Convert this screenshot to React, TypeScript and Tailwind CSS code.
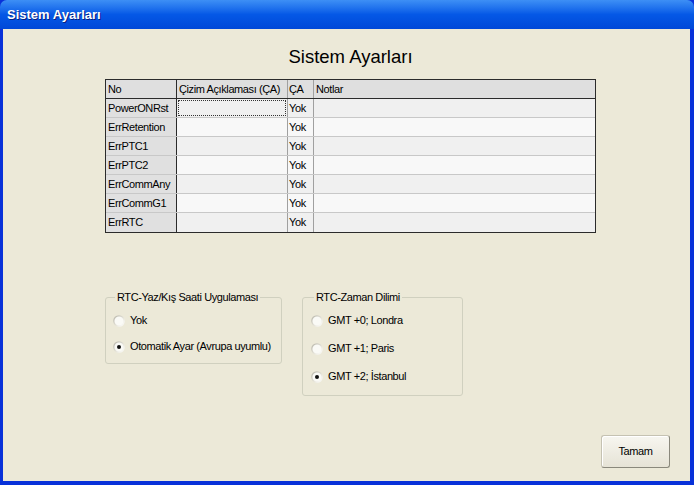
import React from "react";

const rows = [
  "PowerONRst",
  "ErrRetention",
  "ErrPTC1",
  "ErrPTC2",
  "ErrCommAny",
  "ErrCommG1",
  "ErrRTC",
];

const Radio = ({ checked, label }: { checked?: boolean; label: string }) => (
  <div className="flex items-center gap-[5px] h-[13px] whitespace-nowrap">
    <svg width="12" height="12" viewBox="0 0 12 12" className="shrink-0">
      <defs>
        <linearGradient id="rg" x1="0" y1="0" x2="1" y2="1">
          <stop offset="0" stopColor="#b5b3a8" />
          <stop offset="0.6" stopColor="#e8e6dc" />
          <stop offset="1" stopColor="#ffffff" />
        </linearGradient>
      </defs>
      <circle cx="6" cy="6" r="5.2" fill="#fafaf6" stroke="url(#rg)" strokeWidth="1.3" />
      {checked && <circle cx="6" cy="6" r="2" fill="#111" />}
    </svg>
    <span>{label}</span>
  </div>
);

export default function App() {
  return (
    <div className="w-[694px] h-[485px] flex flex-col font-['Liberation_Sans',Arial,sans-serif] text-[11px] tracking-[-0.4px] text-black bg-[#0831d9]">
      {/* title bar */}
      <div className="h-[29px] shrink-0 rounded-t-[7px] bg-gradient-to-b from-[#3d8ff5] via-[#0558e6] to-[#0048d8] flex items-center px-[7px]">
        <span className="text-white font-bold text-[13px] tracking-normal [text-shadow:1px_1px_0_#0a1f80]">
          Sistem Ayarları
        </span>
      </div>

      {/* body */}
      <div className="flex-1 flex flex-col bg-[#ece9d8] ml-[3px] mr-[4px] mb-[4px]">
        <h1 className="mt-[17px] h-[22px] text-center text-[18.5px] tracking-normal leading-[22px] pl-[8px]">
          Sistem Ayarları
        </h1>

        {/* table */}
        <div className="mt-[11px] ml-[102px] w-[491px] border border-[#2b2b2b] bg-white whitespace-nowrap">
          <div className="grid grid-cols-[71px_111px_26px_281px] h-[19px] bg-[#dfdfdf] border-b border-[#2b2b2b] leading-[18px]">
            <div className="pl-[2px] border-r border-[#2b2b2b]">No</div>
            <div className="pl-[2px] border-r border-[#a0a0a0] overflow-hidden">Çizim Açıklaması (ÇA)</div>
            <div className="pl-[1px] border-r border-[#a0a0a0]">ÇA</div>
            <div className="pl-[2px]">Notlar</div>
          </div>
          {rows.map((r, i) => (
            <div
              key={r}
              className={`grid grid-cols-[71px_111px_26px_281px] h-[19px] leading-[18px] ${
                i < rows.length - 1 ? "border-b border-[#c8c8c8]" : ""
              } ${i % 2 === 0 ? "bg-[#f0f0f0]" : "bg-[#f8f8f8]"}`}
            >
              <div className="pl-[2px] bg-[#e0e0e0] border-r border-[#2b2b2b]">{r}</div>
              <div className="border-r border-[#a0a0a0] p-[1px]">
                {i === 0 && <div className="h-full border border-dotted border-[#333]" />}
              </div>
              <div className="pl-[1px] border-r border-[#a0a0a0]">Yok</div>
              <div />
            </div>
          ))}
        </div>

        {/* groups */}
        <div className="mt-[58px] ml-[102px] flex items-start gap-[20px]">
          <fieldset className="w-[177px] h-[73px] border border-[#d0d0bf] rounded-[3px] px-[7px]">
            <legend className="ml-[2px] px-[2px] leading-[13px] whitespace-nowrap">RTC-Yaz/Kış Saati Uygulaması</legend>
            <div className="flex flex-col gap-[13px] mt-[10px]">
              <Radio label="Yok" />
              <Radio checked label="Otomatik Ayar (Avrupa uyumlu)" />
            </div>
          </fieldset>
          <fieldset className="w-[161px] h-[105px] border border-[#d0d0bf] rounded-[3px] px-[8px]">
            <legend className="ml-[3px] px-[2px] leading-[13px] whitespace-nowrap">RTC-Zaman Dilimi</legend>
            <div className="flex flex-col gap-[15px] mt-[10px]">
              <Radio label="GMT +0; Londra" />
              <Radio label="GMT +1; Paris" />
              <Radio checked label="GMT +2; İstanbul" />
            </div>
          </fieldset>
        </div>

        {/* button */}
        <div className="mt-[39px] mr-[20px] flex justify-end">
          <button className="w-[69px] h-[33px] rounded-[3px] border border-[#c5c2b2] border-r-[#8a887c] border-b-[#8a887c] bg-gradient-to-b from-[#f7f6f0] to-[#e6e3d6] text-[11px] shadow-[inset_1px_1px_0_#ffffff]">
            Tamam
          </button>
        </div>
      </div>
    </div>
  );
}
